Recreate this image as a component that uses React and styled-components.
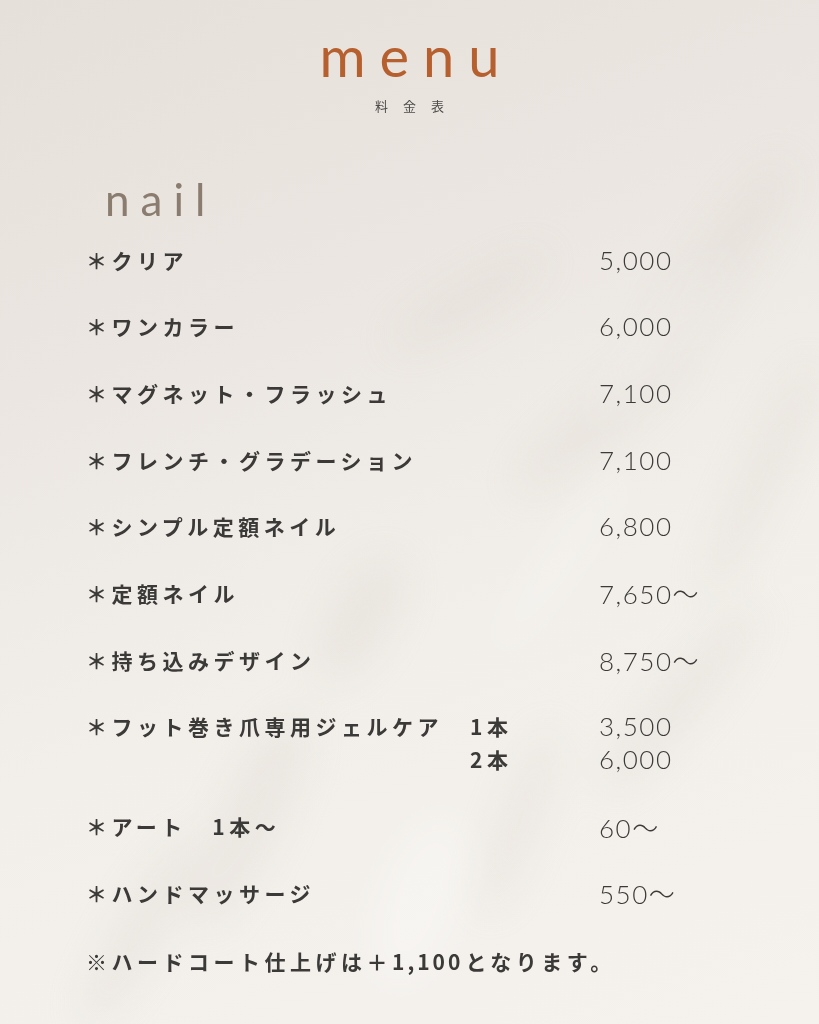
import React from "react";
import styled, { createGlobalStyle } from "styled-components";

const Global = createGlobalStyle`
  html, body { margin: 0; padding: 0; }
  body { background: #ece7e2; }
`;

const Page = styled.div`
  position: relative;
  width: 819px;
  height: 1024px;
  overflow: hidden;
  background: linear-gradient(160deg, #e6e0da 0%, #ebe6e1 30%, #f2efea 60%, #f5f2ee 100%);
  font-family: "Noto Sans CJK JP", "Noto Sans", sans-serif;
  color: #3b3a38;
`;

const Shadows = styled.svg`
  position: absolute;
  inset: 0;
  pointer-events: none;
`;

const Content = styled.div`
  position: relative;
  display: flex;
  flex-direction: column;
  padding: 28px 0 0 0;
`;

const Header = styled.header`
  display: flex;
  flex-direction: column;
  align-items: center;
`;

const Title = styled.h1`
  margin: 0;
  font-family: Lato, "Open Sans", sans-serif;
  font-weight: 400;
  font-size: 56px;
  line-height: 56px;
  letter-spacing: 14px;
  padding-left: 14px;
  color: #b6602f;
`;

const Subtitle = styled.div`
  margin-top: 14px;
  font-size: 13px;
  line-height: 16px;
  letter-spacing: 15px;
  padding-left: 15px;
  color: #4d4b48;
`;

const Section = styled.section`
  display: flex;
  flex-direction: column;
  padding-left: 86px;
  margin-top: 61px;
`;

const SectionTitle = styled.h2`
  margin: 0 0 0 19px;
  font-family: Lato, "Open Sans", sans-serif;
  font-weight: 400;
  font-size: 44px;
  line-height: 48px;
  letter-spacing: 11px;
  color: #8b7c70;
`;

const List = styled.div`
  display: flex;
  flex-direction: column;
  gap: 33.7px;
  margin-top: 20px;
`;

const Row = styled.div`
  display: grid;
  grid-template-columns: 384px 129px auto;
  grid-auto-rows: 33px;
  align-items: center;
`;

const Name = styled.div`
  font-size: 21px;
  font-weight: 700;
  letter-spacing: 4.5px;
  white-space: nowrap;
  color: #3b3a38;
`;

const Qty = styled(Name)`
  grid-column: 2;
`;

const Price = styled.div`
  grid-column: 3;
  font-family: Lato, "Open Sans", sans-serif;
  font-weight: 300;
  font-size: 26px;
  letter-spacing: 1.5px;
  color: #3b3a38;
  white-space: nowrap;
`;

const Tilde = styled.span`
  font-family: "Noto Sans CJK JP", sans-serif;
  font-weight: 300;
  font-size: 26px;
  letter-spacing: 0;
`;

const Note = styled(Name)`
  margin-top: 36px;
  line-height: 33px;
`;

const Num = styled.span`
  letter-spacing: 3px;
  margin-right: 2px;
`;

const items = [
  { name: "＊クリア", price: "5,000" },
  { name: "＊ワンカラー", price: "6,000" },
  { name: "＊マグネット・フラッシュ", price: "7,100" },
  { name: "＊フレンチ・グラデーション", price: "7,100" },
  { name: "＊シンプル定額ネイル", price: "6,800" },
  { name: "＊定額ネイル", price: "7,650", from: true },
  { name: "＊持ち込みデザイン", price: "8,750", from: true },
  {
    name: "＊フット巻き爪専用ジェルケア",
    lines: [
      { qty: "1本", price: "3,500" },
      { qty: "2本", price: "6,000" },
    ],
  },
  { name: "＊アート　1本〜", price: "60", from: true },
  { name: "＊ハンドマッサージ", price: "550", from: true },
];

export default function App() {
  return (
    <Page>
      <Global />
      <Shadows width="819" height="1024" viewBox="0 0 819 1024">
        <defs>
          <filter id="blur" x="-50%" y="-50%" width="200%" height="200%">
            <feGaussianBlur stdDeviation="20" />
          </filter>
        </defs>
        <g filter="url(#blur)" fill="#d9d2ca" opacity="0.3">
          <ellipse cx="720" cy="260" rx="22" ry="120" transform="rotate(35 720 260)" />
          <ellipse cx="600" cy="420" rx="20" ry="110" transform="rotate(50 600 420)" />
          <ellipse cx="760" cy="480" rx="18" ry="130" transform="rotate(25 760 480)" />
          <ellipse cx="470" cy="300" rx="16" ry="90" transform="rotate(60 470 300)" />
          <ellipse cx="360" cy="620" rx="30" ry="70" transform="rotate(30 360 620)" />
          <ellipse cx="680" cy="700" rx="22" ry="120" transform="rotate(40 680 700)" />
          <ellipse cx="520" cy="820" rx="18" ry="100" transform="rotate(20 520 820)" />
          <ellipse cx="250" cy="820" rx="30" ry="120" transform="rotate(25 250 820)" />
          <ellipse cx="140" cy="930" rx="22" ry="110" transform="rotate(30 140 930)" />
        </g>
        <g filter="url(#blur)" fill="#ffffff" opacity="0.3">
          <ellipse cx="660" cy="340" rx="14" ry="110" transform="rotate(40 660 340)" />
          <ellipse cx="560" cy="560" rx="14" ry="120" transform="rotate(35 560 560)" />
          <ellipse cx="420" cy="900" rx="40" ry="90" transform="rotate(20 420 900)" />
        </g>
      </Shadows>
      <Content>
        <Header>
          <Title>menu</Title>
          <Subtitle>料金表</Subtitle>
        </Header>
        <Section>
          <SectionTitle>nail</SectionTitle>
          <List>
            {items.map((it) =>
              it.lines ? (
                <Row key={it.name}>
                  <Name>{it.name}</Name>
                  <Qty>{it.lines[0].qty}</Qty>
                  <Price>{it.lines[0].price}</Price>
                  <Qty>{it.lines[1].qty}</Qty>
                  <Price>{it.lines[1].price}</Price>
                </Row>
              ) : (
                <Row key={it.name}>
                  <Name>{it.name}</Name>
                  <Price>
                    {it.price}
                    {it.from && <Tilde>〜</Tilde>}
                  </Price>
                </Row>
              )
            )}
          </List>
          <Note>
            ※ハードコート仕上げは＋<Num>1,100</Num>となります。
          </Note>
        </Section>
      </Content>
    </Page>
  );
}
